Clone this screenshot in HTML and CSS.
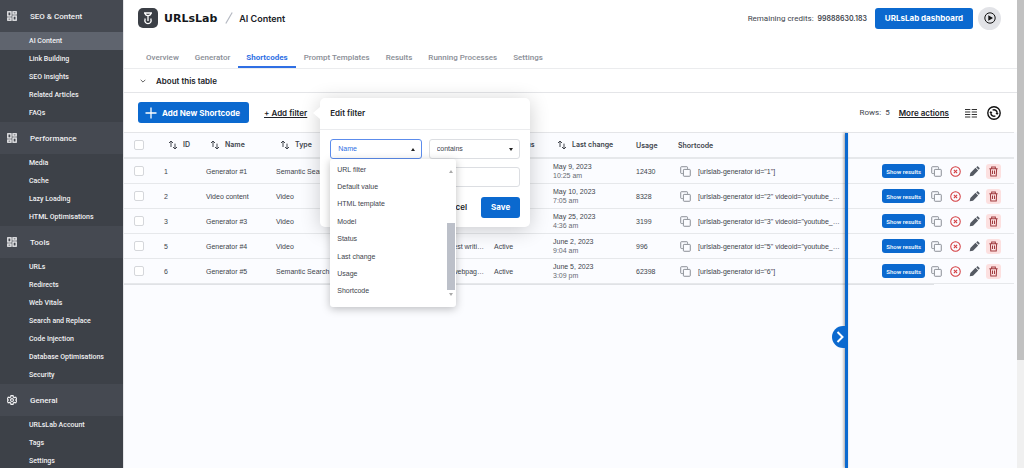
FILE: index.html
```html
<!DOCTYPE html>
<html lang="en">
<head>
    <meta charset="UTF-8">
    <title>URLsLab - AI Content</title>
    <link rel="stylesheet" href="styles.css">
</head>
<body>
    <!-- icons shared by the menu and the table -->
    <svg class="sprite" aria-hidden="true">
        <symbol id="i-grid" viewBox="0 0 10 10">
            <g fill="none" stroke="currentColor" stroke-width="1.3">
                <rect x="0.8" y="0.8" width="3.2" height="4.2"/>
                <rect x="6" y="0.8" width="3.2" height="2.2"/>
                <rect x="0.8" y="7" width="3.2" height="2.2"/>
                <rect x="6" y="5" width="3.2" height="4.2"/>
            </g>
        </symbol>
        <symbol id="i-sort" viewBox="0 0 10 10">
            <path d="M3 7V1.2M1 3l2-2 2 2M7 3.6v5.4M5 7l2 2 2-2" fill="none" stroke="currentColor" stroke-width="1"/>
        </symbol>
        <symbol id="i-copy" viewBox="0 0 12 12">
            <path d="M3 8.2H1.5a.7.7 0 0 1-.7-.7v-6a.7.7 0 0 1 .7-.7h6a.7.7 0 0 1 .7.7V3" fill="none" stroke="currentColor"/>
            <rect x="3.7" y="3.7" width="7.5" height="7.5" rx="0.8" fill="none" stroke="currentColor"/>
        </symbol>
        <symbol id="i-cross" viewBox="0 0 12 12">
            <circle cx="6" cy="6" r="5.2" fill="none" stroke="currentColor" stroke-width="1.1"/>
            <path d="M4.2 4.2l3.6 3.6M7.8 4.2L4.2 7.8" stroke="currentColor" stroke-width="1.1"/>
        </symbol>
        <symbol id="i-pen" viewBox="0 0 12 12">
            <path d="M.8 11.2l.7-3.6 5.6-5.6 2.900 2.900-5.600 5.600zM7.800 1.400l.8-.7c.5-.5 1-.5 1.500 0l1.200 1.200c.5.5.5 1 0 1.500l-.7.8z" fill="currentColor"/>
        </symbol>
        <symbol id="i-trash" viewBox="0 0 12 12">
            <path d="M1.500 3h9M4 3V1.200h4V3M2.600 3l.4 7.800h6L9.400 3M4.900 5v3.600M7.100 5v3.600" fill="none" stroke="currentColor" stroke-width="1.100"/>
        </symbol>
    </svg>

    <div class="app">
        <nav class="sidebar">
            <h2 class="menu-title"><svg><use href="#i-grid"/></svg>SEO &amp; Content</h2>
            <ul class="menu">
                <li class="active"><a href="#">AI Content</a></li>
                <li><a href="#">Link Building</a></li>
                <li><a href="#">SEO Insights</a></li>
                <li><a href="#">Related Articles</a></li>
                <li><a href="#">FAQs</a></li>
            </ul>
            <h2 class="menu-title"><svg><use href="#i-grid"/></svg>Performance</h2>
            <ul class="menu">
                <li><a href="#">Media</a></li>
                <li><a href="#">Cache</a></li>
                <li><a href="#">Lazy Loading</a></li>
                <li><a href="#">HTML Optimisations</a></li>
            </ul>
            <h2 class="menu-title"><svg><use href="#i-grid"/></svg>Tools</h2>
            <ul class="menu">
                <li><a href="#">URLs</a></li>
                <li><a href="#">Redirects</a></li>
                <li><a href="#">Web Vitals</a></li>
                <li><a href="#">Search and Replace</a></li>
                <li><a href="#">Code Injection</a></li>
                <li><a href="#">Database Optimisations</a></li>
                <li><a href="#">Security</a></li>
            </ul>
            <h2 class="menu-title">
                <svg viewBox="0 0 24 24" fill="none" stroke="currentColor" stroke-width="2.800">
                    <path d="M9.500 1.500h5l.7 3.300 2.600 1.500 3.200-1 2.500 4.300-2.500 2.400 2.500 2.400-2.500 4.300-3.200-1-2.600 1.500-.7 3.300h-5l-.7-3.300-2.600-1.500-3.200 1L.5 14.400 3 12 .5 9.600 3 5.300l3.200 1 2.600-1.500z"/>
                    <circle cx="12" cy="12" r="3.500"/>
                </svg>General</h2>
            <ul class="menu">
                <li><a href="#">URLsLab Account</a></li>
                <li><a href="#">Tags</a></li>
                <li><a href="#">Settings</a></li>
            </ul>
        </nav>

        <main class="main">
            <header class="header">
                <div class="logo">
                    <svg viewBox="0 0 20 20" width="20" height="20">
                        <rect width="20" height="20" rx="5" fill="#3b3f46"/>
                        <path d="M6 5h8M7 5c.2 1.800 1.200 2.700 3 2.700S12.800 6.800 13 5M10 7.700v5.300M7.200 10.500c-1 3 .4 5.200 2.800 5.200s3.800-2.200 2.800-5.200" fill="none" stroke="#fff" stroke-width="1.300"/>
                    </svg>
                    <span class="brand">URLsLab</span>
                </div>
                <svg class="slash" viewBox="0 0 8 12"><path d="M7.200.5L.8 11.500" stroke="#b5b9c2" stroke-width="1.200"/></svg>
                <h1>AI Content</h1>
                <p class="credits">Remaining credits: <strong>99888630.183</strong></p>
                <button type="button" class="btn dashboard">URLsLab dashboard</button>
                <button type="button" class="play" aria-label="Run">
                    <svg viewBox="0 0 12 12"><circle cx="6" cy="6" r="5.200" fill="none" stroke="#111"/><path d="M4.300 3.200v5.600L9 6z" fill="#111"/></svg>
                </button>
            </header>

            <nav class="tabs">
                <a href="#">Overview</a>
                <a href="#">Generator</a>
                <a href="#" class="active">Shortcodes</a>
                <a href="#">Prompt Templates</a>
                <a href="#">Results</a>
                <a href="#">Running Processes</a>
                <a href="#">Settings</a>
            </nav>

            <button type="button" class="about">
                <svg viewBox="0 0 6 4"><path d="M.7.8L3 3.100 5.300.8" fill="none" stroke="#555" stroke-width="0.900"/></svg>
                About this table
            </button>

            <div class="toolbar">
                <button type="button" class="btn add">
                    <svg viewBox="0 0 12 12"><path d="M6 .5v11M.5 6h11" stroke="#fff" stroke-width="1.300"/></svg>
                    Add New Shortcode
                </button>
                <div class="filter">
                    <button type="button" class="link">+ Add filter</button>
                    <form class="popover">
                        <h3>Edit filter</h3>
                        <div class="popover-body">
                            <div class="field">
                                <select class="open" aria-label="Column">
                                    <option>Name</option>
                                </select>
                                <div class="dropdown">
                                    <ul role="listbox" aria-label="Columns">
                                        <li role="option">URL filter</li>
                                        <li role="option">Default value</li>
                                        <li role="option">HTML template</li>
                                        <li role="option">Model</li>
                                        <li role="option">Status</li>
                                        <li role="option">Last change</li>
                                        <li role="option">Usage</li>
                                        <li role="option">Shortcode</li>
                                    </ul>
                                    <div class="dropdown-scroll">
                                        <svg viewBox="0 0 4 3"><path d="M0 3l2-3 2 3z" fill="#aaa"/></svg>
                                        <span></span>
                                        <svg viewBox="0 0 4 3"><path d="M0 0l2 3 2-3z" fill="#aaa"/></svg>
                                    </div>
                                </div>
                            </div>
                            <div class="field">
                                <select aria-label="Condition">
                                    <option>contains</option>
                                </select>
                            </div>
                            <input type="text" class="value" aria-label="Value">
                            <div class="popover-actions">
                                <button type="button" class="cancel">Cancel</button>
                                <button type="button" class="btn">Save</button>
                            </div>
                        </div>
                    </form>
                </div>
                <span class="rows">Rows: <b>5</b></span>
                <button type="button" class="link">More actions</button>
                <button type="button" class="icon-btn" aria-label="Columns">
                    <svg width="12" height="10" viewBox="0 0 12 10"><path d="M0 1.500h5.300M0 4h5.300M0 6.500h5.300M0 9h5.300M6.700 1.500H12M6.700 4H12M6.700 6.500H12M6.700 9H12" stroke="#333" stroke-width="1.100"/></svg>
                </button>
                <button type="button" class="icon-btn" aria-label="Reload">
                    <svg width="14" height="14" viewBox="0 0 14 14" fill="none" stroke="#111" stroke-width="1.400">
                        <circle cx="7" cy="7" r="6.200"/>
                        <path d="M5.600 4.100A3.200 3.200 0 0 1 10.100 7.400M8.400 9.900A3.200 3.200 0 0 1 3.900 6.600"/>
                        <path d="M8.500 6.900l1.600 2 1.600-2zM5.500 7.100L3.900 5.100 2.300 7.100z" fill="#111" stroke="none"/>
                    </svg>
                </button>
            </div>

            <div class="table-area">
                <table>
                    <colgroup>
                        <col class="c-check"><col class="c-id"><col class="c-name"><col class="c-type"><col class="c-prompt">
                        <col class="c-status"><col class="c-change"><col class="c-usage"><col><col class="c-actions">
                    </colgroup>
                    <thead>
                        <tr>
                            <th><input type="checkbox" aria-label="Select all"></th>
                            <th><svg><use href="#i-sort"/></svg>ID</th>
                            <th><svg><use href="#i-sort"/></svg>Name</th>
                            <th><svg><use href="#i-sort"/></svg>Type</th>
                            <th></th>
                            <th><svg><use href="#i-sort"/></svg>Status</th>
                            <th><svg><use href="#i-sort"/></svg>Last change</th>
                            <th>Usage</th>
                            <th>Shortcode</th>
                            <th></th>
                        </tr>
                    </thead>
                    <tbody id="rows"></tbody>
                </table>
                <div class="table-scroll"></div>
                <div class="panel-edge">
                    <button type="button" aria-label="Collapse panel">
                        <svg viewBox="0 0 8 12"><path d="M1.500 1l5 5-5 5" fill="none" stroke="#fff" stroke-width="2"/></svg>
                    </button>
                </div>
            </div>
        </main>

        <div class="page-scroll"><span></span></div>
    </div>

    <script src="script.js"></script>
</body>
</html>
```
FILE: styles.css
```css
* {
    box-sizing: border-box;
}

body {
    margin: 0;
    font-family: "Liberation Sans", Arial, sans-serif;
    font-size: 7px;
    color: #40444c;
    background: #fff;
}

h1, h2, h3, p, ul {
    margin: 0;
    padding: 0;
}

ul {
    list-style: none;
}

a {
    color: inherit;
    text-decoration: none;
}

button, input, select {
    font: inherit;
    color: inherit;
}

button {
    padding: 0;
    border: none;
    background: none;
    cursor: pointer;
}

.sprite {
    position: absolute;
    width: 0;
    height: 0;
}

.app {
    display: flex;
    height: 100vh;
    overflow: hidden;
}

/* sidebar */
.sidebar {
    flex: 0 0 123px;
    background: #3d4148;
    color: #f0f0f2;
    font-family: Roboto, sans-serif;
}

.menu-title {
    display: flex;
    align-items: center;
    gap: 13px;
    height: 32px;
    padding-left: 7px;
    background: #454951;
    font-size: 8px;
    font-weight: 500;
}

.menu-title svg {
    width: 10px;
    height: 10px;
}

.menu a {
    display: block;
    padding-left: 29px;
    font-weight: 500;
    line-height: 18px;
}

.menu .active {
    background: #5f646e;
}

/* header */
.main {
    flex: 1;
    min-width: 0;
    display: flex;
    flex-direction: column;
    border-left: 1px solid #e4e5e8;
}

.header {
    display: flex;
    align-items: center;
    height: 36px;
    padding: 0 16px 0 14px;
}

.logo {
    display: flex;
    align-items: center;
    gap: 6px;
}

.brand {
    font-family: "DejaVu Sans", sans-serif;
    font-size: 11px;
    font-weight: bold;
    color: #15171b;
}

.slash {
    width: 8px;
    height: 12px;
    margin: 0 6px 0 8px;
}

h1 {
    font-family: Inter, sans-serif;
    font-size: 9px;
    font-weight: 600;
    color: #202227;
}

.credits {
    margin-left: auto;
    font-family: Roboto, sans-serif;
    font-size: 8px;
}

.credits strong {
    font-family: Inter, sans-serif;
    font-size: 7px;
    font-weight: 600;
    margin-left: 2px;
}

.btn {
    height: 21px;
    padding: 0 10px;
    border-radius: 3px;
    background: #0b69cf;
    color: #fff;
    font-family: Inter, sans-serif;
    font-size: 8px;
    font-weight: 700;
}

.dashboard {
    margin: 0 5px 0 8px;
}

.play {
    display: flex;
    align-items: center;
    justify-content: center;
    width: 23px;
    height: 23px;
    border-radius: 50%;
    background: #e2e3e7;
}

.play svg {
    width: 12px;
    height: 12px;
}

/* tabs */
.tabs {
    display: flex;
    height: 33px;
    padding: 0 14px;
    border-bottom: 1px solid #ebecee;
    font-family: Roboto, sans-serif;
    font-size: 8px;
}

.tabs a {
    display: flex;
    align-items: flex-end;
    padding: 0 8px 4px;
    border-bottom: 2px solid transparent;
    color: #8a8e96;
    font-weight: 500;
}

.tabs .active {
    border-color: #2f6fe4;
    color: #2f6fe4;
    font-weight: 700;
}

.about {
    display: flex;
    align-items: center;
    gap: 10px;
    height: 24px;
    padding-left: 16px;
    border-bottom: 1px solid #e4e5e8;
    color: #202227;
    font-family: Inter, sans-serif;
    font-size: 8px;
    font-weight: 600;
}

.about svg {
    width: 6px;
    height: 4px;
}

/* toolbar */
.toolbar {
    display: flex;
    align-items: center;
    height: 39px;
    padding: 0 16px 0 14px;
}

.add {
    display: flex;
    align-items: center;
    gap: 5px;
    padding: 0 9px 0 7px;
}

.add svg {
    width: 12px;
    height: 12px;
}

.link {
    color: #202227;
    font-family: Inter, sans-serif;
    font-size: 8px;
    font-weight: 600;
    text-decoration: underline;
}

.filter {
    position: relative;
    margin: 0 auto 0 15px;
}

.rows {
    margin-right: 9px;
    font-family: Roboto, sans-serif;
    font-size: 8px;
}

.rows b {
    margin-left: 2px;
    font-weight: 400;
}

.icon-btn {
    display: flex;
    margin-left: 16px;
}

.icon-btn + .icon-btn {
    margin-left: 10px;
}

/* filter popover */
.popover {
    position: absolute;
    top: -10px;
    left: calc(100% + 13px);
    z-index: 3;
    width: 210px;
    border-radius: 5px;
    background: #fff;
    box-shadow: 0 3px 20px rgba(0, 0, 0, 0.2);
}

.popover::before {
    content: "";
    position: absolute;
    top: 9px;
    left: -7px;
    border: 6px solid transparent;
    border-left: none;
    border-right: 7px solid #fff;
}

.popover h3 {
    padding: 0 10px;
    border-bottom: 1px solid #ebecee;
    color: #202227;
    font-family: Inter, sans-serif;
    font-size: 8px;
    font-weight: 600;
    line-height: 31px;
}

.popover-body {
    display: grid;
    grid-template-columns: 1fr 1fr;
    gap: 8px 7px;
    padding: 9px 10px;
}

.field {
    position: relative;
}

select, .value {
    display: block;
    width: 100%;
    height: 20px;
    padding: 0 7px;
    border: 1px solid #dcdee2;
    border-radius: 3px;
    background: #fff;
}

select {
    appearance: none;
}

select.open {
    border-color: #5c8cec;
    color: #2f6fe4;
}

.field::after {
    content: "";
    position: absolute;
    top: 9px;
    right: 7px;
    border: 2px solid transparent;
    border-top: 3px solid #222;
    border-bottom: none;
}

.field:has(.open)::after {
    border-top: none;
    border-bottom: 3px solid #222;
}

.value, .popover-actions {
    grid-column: 1 / -1;
}

.popover-actions {
    display: flex;
    justify-content: flex-end;
    gap: 14px;
    padding-top: 2px;
}

.cancel {
    color: #202227;
    font-family: Inter, sans-serif;
    font-size: 8px;
    font-weight: 600;
}

.dropdown {
    position: absolute;
    top: 100%;
    left: 0;
    z-index: 1;
    display: flex;
    justify-content: space-between;
    width: 126px;
    height: 148px;
    padding: 2px 1px 7px 7px;
    border-radius: 3px;
    background: #fff;
    box-shadow: 0 2px 8px rgba(0, 0, 0, 0.25);
}

.dropdown ul {
    display: flex;
    flex-direction: column;
    justify-content: space-between;
}

.dropdown li {
    line-height: 17px;
}

.dropdown-scroll {
    display: flex;
    flex-direction: column;
    align-items: center;
    width: 8px;
    padding: 9px 0 4px;
}

.dropdown-scroll svg {
    width: 4px;
    height: 3px;
}

.dropdown-scroll span {
    width: 8px;
    height: 67px;
    margin: auto 0 3px;
    background: #bcc0c9;
}

/* table */
.table-area {
    position: relative;
    flex: 1;
    padding-right: 3px;
    background: #fbfcff;
}

table {
    width: 100%;
    table-layout: fixed;
    border-collapse: separate;
    border-spacing: 0;
    border-top: 1px solid #e4e5e8;
}

.c-check { width: 30px; }
.c-id { width: 42px; }
.c-name { width: 70px; }
.c-type { width: 68px; }
.c-prompt { width: 150px; }
.c-status { width: 59px; }
.c-change { width: 83px; }
.c-usage { width: 42px; }
.c-actions { width: 167px; }

th, td {
    height: 25px;
    padding: 0 0 0 10px;
    border-bottom: 1px solid #e6e8eb;
    text-align: left;
    white-space: nowrap;
    line-height: 9px;
}

th {
    height: 26px;
    border-bottom-width: 2px;
    font-family: Inter, sans-serif;
    font-weight: 600;
}

th svg {
    width: 10px;
    height: 10px;
    margin: 0 5px 0 4px;
    vertical-align: middle;
}

input[type="checkbox"] {
    appearance: none;
    display: block;
    width: 10px;
    height: 10px;
    margin: 0;
    border: 1px solid #d5d7db;
    border-radius: 2px;
    background: #fff;
}

.prompt {
    text-align: right;
}

.date span {
    display: block;
    color: #666a72;
}

.shortcode div, .actions div {
    display: flex;
    align-items: center;
}

.shortcode div {
    gap: 7px;
}

.shortcode svg {
    flex: none;
    width: 11px;
    height: 11px;
    margin-left: 2px;
    color: #80848c;
}

.actions {
    padding-right: 13px;
}

.actions div {
    justify-content: flex-end;
    gap: 4px;
}

.show {
    height: 14px;
    padding: 0 4px;
    font-family: Roboto, sans-serif;
    font-size: 6px;
    font-weight: 500;
}

.act {
    display: flex;
    align-items: center;
    justify-content: center;
    width: 15px;
    height: 15px;
    border-radius: 3px;
    color: #80848c;
}

.act svg {
    width: 11px;
    height: 11px;
}

.act.cross { color: #d33b3f; }
.act.pen { color: #555a63; }

.act.trash {
    background: #fce0e0;
    color: #a03a3e;
}

.table-scroll {
    width: 91%;
    height: 1px;
    background: #e0e2e6;
}

.panel-edge {
    position: absolute;
    top: 1px;
    bottom: 0;
    right: 169px;
    width: 3px;
    background: #0b69cf;
    box-shadow: -1px 0 3px rgba(0, 0, 0, 0.4);
}

.panel-edge button {
    position: absolute;
    top: 193px;
    right: 0;
    display: flex;
    align-items: center;
    justify-content: center;
    width: 16px;
    height: 22px;
    border-radius: 11px 0 0 11px;
    background: #0b69cf;
}

.panel-edge svg {
    width: 8px;
    height: 12px;
}

.page-scroll {
    flex: 0 0 7px;
    background: #f0f0f0;
}

.page-scroll span {
    display: block;
    height: 77%;
    background: #c1c1c1;
}
```
FILE: script.js
```js
const shortcodes = [
    { id: 1, name: 'Generator #1', type: 'Semantic Search', prompt: '', status: 'Active', date: 'May 9, 2023', time: '10:25 am', usage: 12430, code: '[urlslab-generator id="1"]' },
    { id: 2, name: 'Video content', type: 'Video', prompt: '', status: 'Active', date: 'May 10, 2023', time: '7:05 am', usage: 8328, code: '[urlslab-generator id="2" videoid="youtube_…' },
    { id: 3, name: 'Generator #3', type: 'Video', prompt: '', status: 'Active', date: 'May 25, 2023', time: '4:36 am', usage: 3199, code: '[urlslab-generator id="3" videoid="youtube_…' },
    { id: 5, name: 'Generator #4', type: 'Video', prompt: 'best writi…', status: 'Active', date: 'June 2, 2023', time: '9:04 am', usage: 996, code: '[urlslab-generator id="5" videoid="youtube_…' },
    { id: 6, name: 'Generator #5', type: 'Semantic Search', prompt: 'webpag…', status: 'Active', date: 'June 5, 2023', time: '3:09 pm', usage: 62398, code: '[urlslab-generator id="6"]' }
];

const rows = document.getElementById('rows');

shortcodes.forEach(item => {
    const row = document.createElement('tr');
    row.innerHTML = `
        <td><input type="checkbox" aria-label="Select row ${item.id}"></td>
        <td>${item.id}</td>
        <td>${item.name}</td>
        <td>${item.type}</td>
        <td class="prompt">${item.prompt}</td>
        <td>${item.status}</td>
        <td class="date">${item.date}<span>${item.time}</span></td>
        <td>${item.usage}</td>
        <td class="shortcode"><div><svg><use href="#i-copy"/></svg><span>${item.code}</span></div></td>
        <td class="actions"><div>
            <button type="button" class="btn show">Show results</button>
            <button type="button" class="act" aria-label="Copy"><svg><use href="#i-copy"/></svg></button>
            <button type="button" class="act cross" aria-label="Deactivate"><svg><use href="#i-cross"/></svg></button>
            <button type="button" class="act pen" aria-label="Edit"><svg><use href="#i-pen"/></svg></button>
            <button type="button" class="act trash" aria-label="Delete"><svg><use href="#i-trash"/></svg></button>
        </div></td>`;
    rows.appendChild(row);
});
```
